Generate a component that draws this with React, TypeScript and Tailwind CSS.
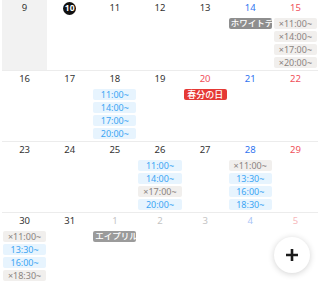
import { FC } from 'react'

type Chip = { text: string; kind: 'open' | 'cancel' | 'event' | 'holiday' | 'eventFaded' }
type Day = { n: number; tone: 'normal' | 'sat' | 'sun' | 'otherNormal' | 'otherSat' | 'otherSun'; today?: boolean; shaded?: boolean; chips?: Chip[] }

const toneClass: Record<Day['tone'], string> = {
  normal: 'text-[#333333]',
  sat: 'text-[#2f74f0]',
  sun: 'text-[#f0505a]',
  otherNormal: 'text-[#c4c4c4]',
  otherSat: 'text-[#a9c4f6]',
  otherSun: 'text-[#f6b8bc]',
}

const chipClass: Record<Chip['kind'], string> = {
  open: 'bg-[#e7f4fe] text-[#3ba5f4] justify-center text-[9px]',
  cancel: 'bg-[#f1efed] text-[#8b8481] justify-center text-[9px]',
  event: 'bg-[#8e8e8e] text-white justify-start pl-[2px] text-[8.5px] font-medium',
  eventFaded: 'bg-[#9b9b9b] text-white justify-start pl-[2px] text-[8.5px] font-medium',
  holiday: 'bg-[#e53935] text-white justify-center text-[9px] font-medium',
}

const o = (text: string): Chip => ({ text, kind: 'open' })
const x = (text: string): Chip => ({ text: '×' + text, kind: 'cancel' })

const weeks: Day[][] = [
  [
    { n: 9, tone: 'normal', shaded: true },
    { n: 10, tone: 'normal', today: true },
    { n: 11, tone: 'normal' },
    { n: 12, tone: 'normal' },
    { n: 13, tone: 'normal' },
    { n: 14, tone: 'sat', chips: [{ text: 'ホワイトデー', kind: 'event' }] },
    { n: 15, tone: 'sun', chips: [x('11:00~'), x('14:00~'), x('17:00~'), x('20:00~')] },
  ],
  [
    { n: 16, tone: 'normal' },
    { n: 17, tone: 'normal' },
    { n: 18, tone: 'normal', chips: [o('11:00~'), o('14:00~'), o('17:00~'), o('20:00~')] },
    { n: 19, tone: 'normal' },
    { n: 20, tone: 'sun', chips: [{ text: '春分の日', kind: 'holiday' }] },
    { n: 21, tone: 'sat' },
    { n: 22, tone: 'sun' },
  ],
  [
    { n: 23, tone: 'normal' },
    { n: 24, tone: 'normal' },
    { n: 25, tone: 'normal' },
    { n: 26, tone: 'normal', chips: [o('11:00~'), o('14:00~'), x('17:00~'), o('20:00~')] },
    { n: 27, tone: 'normal' },
    { n: 28, tone: 'sat', chips: [x('11:00~'), o('13:30~'), o('16:00~'), o('18:30~')] },
    { n: 29, tone: 'sun' },
  ],
  [
    { n: 30, tone: 'normal', chips: [x('11:00~'), o('13:30~'), o('16:00~'), x('18:30~')] },
    { n: 31, tone: 'normal' },
    { n: 1, tone: 'otherNormal', chips: [{ text: 'エイプリルフール', kind: 'eventFaded' }] },
    { n: 2, tone: 'otherNormal' },
    { n: 3, tone: 'otherNormal' },
    { n: 4, tone: 'otherSat' },
    { n: 5, tone: 'otherSun' },
  ],
]

const DayCell: FC<{ day: Day }> = ({ day }) => {
  return (
    <div className={`flex flex-col items-center h-full min-w-0 ${day.shaded ? 'bg-[#f2f2f2]' : ''}`}>
      <div className="h-[16px] flex items-center justify-center">
        {day.today ? (
          <span className="w-[13px] h-[13px] rounded-full bg-[#111111] text-white text-[8.5px] font-bold flex items-center justify-center leading-none">
            {day.n}
          </span>
        ) : (
          <span className={`text-[9.5px] leading-none ${toneClass[day.tone]}`}>{day.n}</span>
        )}
      </div>
      {day.chips && (
        <div className="mt-[2px] w-full px-[1px] flex flex-col gap-[2px]">
          {day.chips.map((c, i) => (
            <div
              key={i}
              className={`h-[11px] w-full rounded-[2px] flex items-center overflow-hidden whitespace-nowrap leading-none ${chipClass[c.kind]}`}
            >
              {c.text}
            </div>
          ))}
        </div>
      )}
    </div>
  )
}

const App = () => {
  return (
    <div
      className="relative w-[320px] h-[282px] overflow-hidden bg-white px-[2px]"
      style={{ fontFamily: '"Noto Sans", "Noto Sans CJK JP", sans-serif' }}
    >
      {weeks.map((week, wi) => (
        <div key={wi} className="grid grid-cols-7 h-[71px] border-b border-[#ececec]">
          {week.map((d, di) => (
            <DayCell key={di} day={d} />
          ))}
        </div>
      ))}
      {/* add button */}
      <button className="absolute left-[274px] top-[237px] w-[36px] h-[36px] rounded-full bg-white shadow-[0_1px_6px_rgba(0,0,0,0.18)] flex items-center justify-center">
        <svg width="14" height="14" viewBox="0 0 14 14">
          <path d="M7 1v12M1 7h12" stroke="#1a1a1a" strokeWidth="2.6" strokeLinecap="butt" />
        </svg>
      </button>
    </div>
  )
}

export default App
